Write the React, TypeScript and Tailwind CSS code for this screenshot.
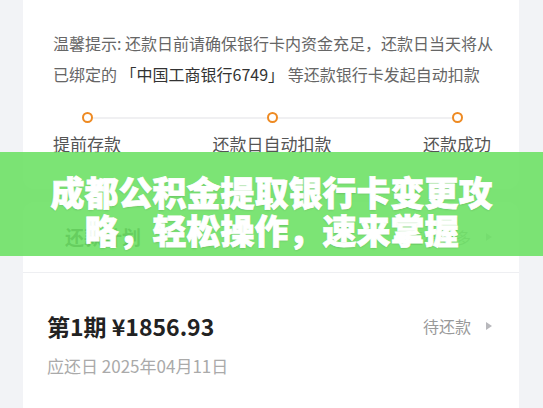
import React from "react";

const font = { fontFamily: '"Noto Sans CJK SC", "Noto Sans", sans-serif' };

function Arrow() {
  return (
    <svg width="8" height="10" viewBox="0 0 8 10" className="ml-[14px]">
      <path d="M1 1 L7 5 L1 9 Z" fill="#b8b8bc" />
    </svg>
  );
}

function Step({ label }: { label: string }) {
  return (
    <div className="flex flex-col items-center">
      <div className="relative z-10 h-[11px] w-[11px] rounded-full border-[2.5px] border-[#ee8a22] bg-white" />
      <span className="mt-[10px] text-[17px] leading-[22px] text-[#555]">{label}</span>
    </div>
  );
}

export default function App() {
  return (
    <div
      className="relative h-[408px] w-[543px] overflow-hidden bg-[#f2f3f6]"
      style={font}
    >
      <div className="flex flex-col pl-[23px] pr-[24px]">
        {/* tips card */}
        <div className="rounded-b-xl bg-white pl-[30px] pr-[28px] pt-[28px] pb-[34px]">
          <p className="whitespace-nowrap text-[16px] leading-[31px] text-[#666]">
            温馨提示: 还款日前请确保银行卡内资金充足，还款日当天将从
            <br />
            已绑定的 <span className="text-[#333]">「中国工商银行6749」</span> 等还款银行卡发起自动扣款
          </p>
          <div className="relative mt-[22px] flex justify-between">
            <div className="absolute left-[34px] right-[34px] top-[5px] h-[2px] bg-[#f0f0f2]" />
            <Step label="提前存款" />
            <Step label="还款日自动扣款" />
            <Step label="还款成功" />
          </div>
        </div>

        {/* plan card */}
        <div className="mt-[13px] rounded-t-xl bg-white">
          <div className="flex h-[71px] items-center justify-between border-b border-[#eeeff2] pl-[42px] pr-[26px]">
            <span className="text-[19px] font-bold text-[#222]">还款计划</span>
            <div className="flex items-center text-[16px] text-[#999]">
              查看更多
              <Arrow />
            </div>
          </div>
          <div className="pl-[24px] pr-[26px] pt-[38px] pb-[40px]">
            <div className="flex items-center justify-between">
              <span className="text-[23px] font-bold leading-[30px] text-[#222]">第1期 ¥1856.93</span>
              <div className="flex items-center text-[16px] text-[#999]">
                待还款
                <Arrow />
              </div>
            </div>
            <div className="mt-[13px] text-[17px] leading-[24px] text-[#aaa]">应还日 2025年04月11日</div>
          </div>
        </div>
      </div>

      {/* banner overlay */}
      <div className="absolute left-0 right-0 top-[152px] h-[104px] bg-[#6ee166]/90 pt-[21px] text-center">
        <h1
          className="text-[34px] font-black leading-[38px] text-white [-webkit-text-stroke:0.8px_white]"
          style={{ textShadow: "0 1px 2px rgba(0,0,0,0.15)" }}
        >
          成都公积金提取银行卡变更攻
          <br />
          略，轻松操作，速来掌握
        </h1>
      </div>
    </div>
  );
}
